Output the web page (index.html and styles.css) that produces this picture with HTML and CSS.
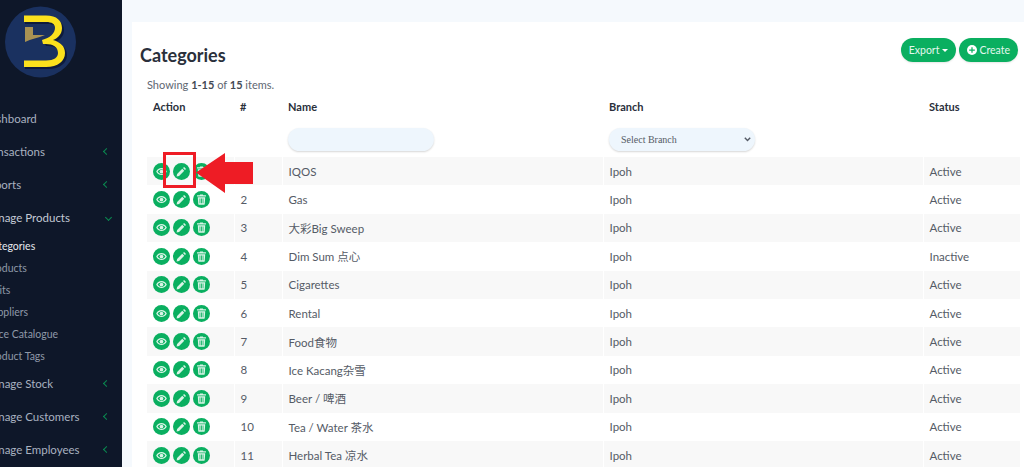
FILE: index.html
```html
<!DOCTYPE html>
<html lang="en">
<head>
<meta charset="utf-8">
<title>Categories</title>
<link rel="stylesheet" href="styles.css">
</head>
<body>
<svg class="defs" width="0" height="0" aria-hidden="true">
  <symbol id="eye" viewBox="0 0 16 16"><path fill="currentColor" fill-rule="evenodd" d="M8 3C4.500 3 1.700 5.100.3 8c1.400 2.900 4.200 5 7.700 5s6.300-2.100 7.700-5C14.300 5.100 11.500 3 8 3zm0 1.600c2.300 0 4.400 1.300 5.600 3.400-1.200 2.100-3.300 3.400-5.600 3.400S3.600 10.100 2.400 8C3.600 5.900 5.700 4.600 8 4.600z"/><circle fill="currentColor" cx="8" cy="8" r="2.700"/></symbol>
  <symbol id="pen" viewBox="0 0 16 16"><path fill="currentColor" d="M11.800 1.400l2.800 2.800-1.600 1.600-2.800-2.800zM9.100 4l2.900 2.900-7.500 7.500-3.600.7.700-3.600z"/></symbol>
  <symbol id="bin" viewBox="0 0 16 16"><path fill="currentColor" fill-rule="evenodd" d="M6 .6h4l.6 1.200H14.500v2H1.500v-2h3.900zM2.600 4.800h10.800l-.7 10c0 .4-.4.700-.9.700H4.200c-.5 0-.9-.3-.9-.7zm2.600 1.800v7h1.100v-7zm2.200 0v7h1.200v-7zm2.300 0v7h1.100v-7z"/></symbol>
</svg>
<div class="app">
  <aside class="sidebar">
    <svg class="logo" width="80" height="80" viewBox="0 0 80 80" aria-label="Logo">
      <circle cx="40.500" cy="42" r="35.500" fill="#1a3160"/>
      <path fill="#0b1430" opacity=".75" d="M25 17.500H47C58 17.500 64 23 64 30C64 36 60 40 55 42C62 44 67 48 67 55C67 63 60 69 48 69H25V62H48C56 62 60 59 60 55C60 49 55 46 48 46H46L44 42C52 40 57 35 57 30C57 26 54 24 48 24H25Z"/>
      <path fill="#fbe11d" d="M24 15.500H46C57 15.500 62 21 62 28C62 34 58 38 53 40C60 42 65 46 65 53C65 61 58 67 46 67H24V60.500H46C54 60.500 58 57.500 58 53C58 47 53 44 46 44H43L42 40C50 38 55 33 55 28C55 24 52 22 46 22H24Z"/>
      <path fill="#a99253" d="M25 27H33V35H45C38 38 31 39 25 42Z"/>
    </svg>
    <nav class="menu">
      <a class="item">Dashboard</a>
      <a class="item">Transactions<i class="chev"></i></a>
      <a class="item">Reports<i class="chev"></i></a>
      <a class="item open">Manage Products<i class="chev down"></i></a>
      <div class="sub">
        <a class="subitem active">Categories</a>
        <a class="subitem">Products</a>
        <a class="subitem">Units</a>
        <a class="subitem">Suppliers</a>
        <a class="subitem">Price Catalogue</a>
        <a class="subitem">Product Tags</a>
      </div>
      <a class="item">Manage Stock<i class="chev"></i></a>
      <a class="item">Manage Customers<i class="chev"></i></a>
      <a class="item">Manage Employees<i class="chev"></i></a>
    </nav>
  </aside>
  <main class="main">
    <section class="card">
      <header class="head">
        <h1>Categories</h1>
        <div class="actions">
          <button class="btn">Export <span class="caret"></span></button>
          <button class="btn"><svg class="plus" viewBox="0 0 16 16" width="10" height="10"><circle cx="8" cy="8" r="8" fill="#fff"/><path d="M7 3.500h2V7h3.500v2H9v3.500H7V9H3.500V7H7z" fill="#0aaf60"/></svg> Create</button>
        </div>
      </header>
      <p class="summary">Showing <b>1-15</b> of <b>15</b> items.</p>
      <table class="grid">
        <colgroup><col class="c1"><col class="c2"><col class="c3"><col class="c4"><col class="c5"></colgroup>
        <thead>
          <tr><th>Action</th><th>#</th><th>Name</th><th>Branch</th><th>Status</th></tr>
          <tr class="filters">
            <td></td><td></td>
            <td><input class="field" type="text" aria-label="Name"></td>
            <td><select class="field pick" aria-label="Branch"><option>Select Branch</option></select></td>
            <td></td>
          </tr>
        </thead>
        <tbody>
          <tr><td><span class="ops"><a class="op"><svg><use href="#eye"/></svg></a><a class="op"><svg><use href="#pen"/></svg></a><a class="op"><svg><use href="#bin"/></svg></a></span></td><td>1</td><td>IQOS</td><td>Ipoh</td><td>Active</td></tr>
          <tr><td><span class="ops"><a class="op"><svg><use href="#eye"/></svg></a><a class="op"><svg><use href="#pen"/></svg></a><a class="op"><svg><use href="#bin"/></svg></a></span></td><td>2</td><td>Gas</td><td>Ipoh</td><td>Active</td></tr>
          <tr><td><span class="ops"><a class="op"><svg><use href="#eye"/></svg></a><a class="op"><svg><use href="#pen"/></svg></a><a class="op"><svg><use href="#bin"/></svg></a></span></td><td>3</td><td>大彩Big Sweep</td><td>Ipoh</td><td>Active</td></tr>
          <tr><td><span class="ops"><a class="op"><svg><use href="#eye"/></svg></a><a class="op"><svg><use href="#pen"/></svg></a><a class="op"><svg><use href="#bin"/></svg></a></span></td><td>4</td><td>Dim Sum 点心</td><td>Ipoh</td><td>Inactive</td></tr>
          <tr><td><span class="ops"><a class="op"><svg><use href="#eye"/></svg></a><a class="op"><svg><use href="#pen"/></svg></a><a class="op"><svg><use href="#bin"/></svg></a></span></td><td>5</td><td>Cigarettes</td><td>Ipoh</td><td>Active</td></tr>
          <tr><td><span class="ops"><a class="op"><svg><use href="#eye"/></svg></a><a class="op"><svg><use href="#pen"/></svg></a><a class="op"><svg><use href="#bin"/></svg></a></span></td><td>6</td><td>Rental</td><td>Ipoh</td><td>Active</td></tr>
          <tr><td><span class="ops"><a class="op"><svg><use href="#eye"/></svg></a><a class="op"><svg><use href="#pen"/></svg></a><a class="op"><svg><use href="#bin"/></svg></a></span></td><td>7</td><td>Food食物</td><td>Ipoh</td><td>Active</td></tr>
          <tr><td><span class="ops"><a class="op"><svg><use href="#eye"/></svg></a><a class="op"><svg><use href="#pen"/></svg></a><a class="op"><svg><use href="#bin"/></svg></a></span></td><td>8</td><td>Ice Kacang杂雪</td><td>Ipoh</td><td>Active</td></tr>
          <tr><td><span class="ops"><a class="op"><svg><use href="#eye"/></svg></a><a class="op"><svg><use href="#pen"/></svg></a><a class="op"><svg><use href="#bin"/></svg></a></span></td><td>9</td><td>Beer / 啤酒</td><td>Ipoh</td><td>Active</td></tr>
          <tr><td><span class="ops"><a class="op"><svg><use href="#eye"/></svg></a><a class="op"><svg><use href="#pen"/></svg></a><a class="op"><svg><use href="#bin"/></svg></a></span></td><td>10</td><td>Tea / Water 茶水</td><td>Ipoh</td><td>Active</td></tr>
          <tr><td><span class="ops"><a class="op"><svg><use href="#eye"/></svg></a><a class="op"><svg><use href="#pen"/></svg></a><a class="op"><svg><use href="#bin"/></svg></a></span></td><td>11</td><td>Herbal Tea 凉水</td><td>Ipoh</td><td>Active</td></tr>
        </tbody>
      </table>
    </section>
  </main>
</div>
<div class="callout-box"></div>
<svg class="callout-arrow" width="58" height="40" viewBox="0 0 58 40" aria-hidden="true"><path fill="#ee1c25" d="M0 19.500 29 0v9h28v22H29v9z"/></svg>
</body>
</html>
```
FILE: styles.css
```css
* { box-sizing: border-box; }
html, body { margin: 0; height: 467px; overflow: hidden; }
body { font-family: Lato, "Noto Sans CJK SC", sans-serif; font-size: 11.500px; color: #555b66; background: #f5f9fd; }
.defs { position: absolute; }
.app { display: flex; height: 467px; }
.sidebar { width: 122px; flex: none; background: #0e1729; overflow: hidden; }
.logo { display: block; }
.menu { margin: 22px 0 0 -18px; width: 140px; display: flex; flex-direction: column; }
.item { display: flex; justify-content: space-between; align-items: center; height: 33px; padding-right: 9px; color: #a9b2c0; font-size: 11.500px; white-space: nowrap; }
.item.open { color: #c3cad5; }
.chev { width: 5px; height: 5px; border-left: 1.500px solid #0a8a50; border-bottom: 1.500px solid #0a8a50; transform: rotate(45deg); margin-right: 4px; }
.chev.down { transform: rotate(-45deg); margin-right: 2px; }
.sub { display: flex; flex-direction: column; margin: 1px 0 0; }
.subitem { height: 22px; line-height: 22px; color: #8f99a8; font-size: 10.500px; padding-left: 4px; white-space: nowrap; }
.subitem.active { color: #e6e9ee; }
.main { flex: 1; min-width: 0; padding: 22px 0 0 10px; }
.card { background: #fff; height: 445px; padding: 15px 6px 0 8px; overflow: hidden; }
.head { display: flex; justify-content: space-between; align-items: flex-start; padding-top: 1px; }
h1 { margin: 5px 0 0; font-size: 18px; font-weight: 700; line-height: 24px; color: #2a303b; }
.actions { display: flex; gap: 3px; }
.btn { height: 24px; border: 0; border-radius: 12px; background: #0aaf60; color: #e4f7ee; font: 10.500px Lato, sans-serif; padding: 0 8px; display: flex; align-items: center; gap: 2px; box-shadow: 0 1px 2px rgba(0,0,0,.1); }
.caret { border: 3px solid transparent; border-top-color: #fff; border-bottom: 0; margin-left: 1px; }
.plus { display: block; }
.summary { margin: 10px 0 0 7px; line-height: 16px; font-size: 11px; color: #606672; }
.summary b { font-weight: 700; color: #444a55; }
.grid { margin: 5px 0 0 7px; width: 873px; table-layout: fixed; border-collapse: collapse; }
.c1 { width: 87px; } .c2 { width: 48px; } .c3 { width: 321px; } .c4 { width: 320px; } .c5 { width: 97px; }
th { text-align: left; font-size: 11px; font-weight: 700; color: #2a303b; padding: 0 6px; height: 18px; line-height: 18px; }
td { padding: 0 6px; height: 28.400px; border-left: 1px solid #fff; }
td:first-child { border-left: 0; }
.filters td { height: 41px; padding-top: 5px; vertical-align: middle; border: 0; }
tbody tr:nth-child(odd) td { background: #f8f8f8; }
.field { display: block; width: 146px; height: 23px; border: 0; border-radius: 12px; background: #eef6fd; box-shadow: 0 1px 2px rgba(0,0,0,.16); }
.pick { appearance: none; font: 10px "Liberation Serif", serif; color: #555b66; padding-left: 12px; background: #eef6fd url("data:image/svg+xml,%3Csvg xmlns='http://www.w3.org/2000/svg' width='7' height='5' viewBox='0 0 7 5'%3E%3Cpath d='M.8.8 3.500 3.600 6.200.8' fill='none' stroke='%23555b66' stroke-width='1.400'/%3E%3C/svg%3E") no-repeat right 4px center; }
.ops { display: flex; gap: 3px; }
.op { width: 17px; height: 17px; border-radius: 50%; background: #0aaf60; color: #d9f4e6; display: flex; align-items: center; justify-content: center; }
.op svg { width: 11px; height: 11px; display: block; }
.callout-box { position: absolute; left: 163px; top: 152px; width: 33px; height: 36px; border: 3px solid #ee1c25; }
.callout-arrow { position: absolute; left: 196px; top: 153px; }
```
